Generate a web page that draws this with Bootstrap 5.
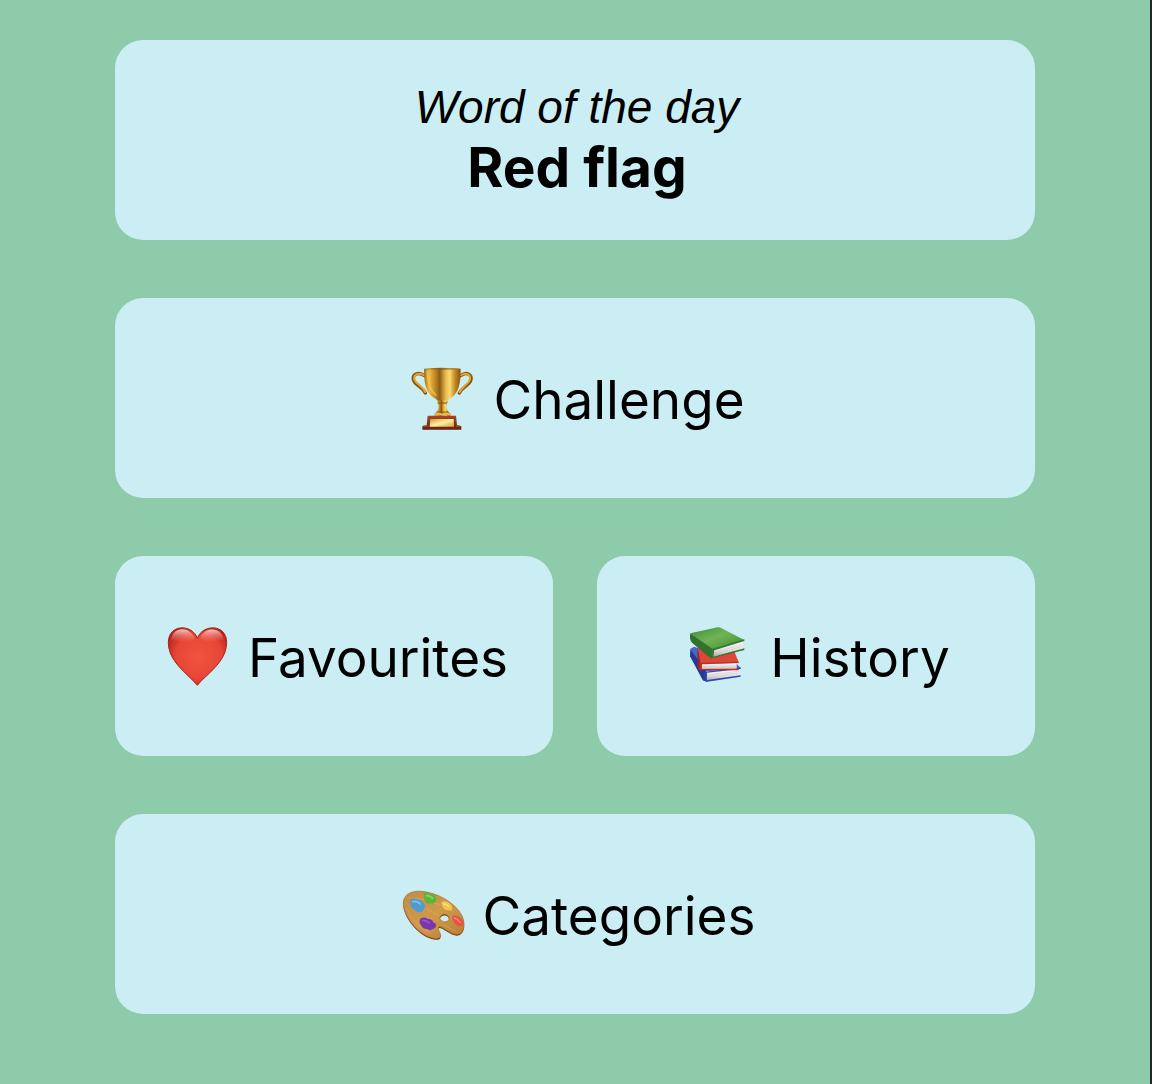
<!DOCTYPE html>
<html lang="en">
<head>
<meta charset="utf-8">
<meta name="viewport" content="width=device-width, initial-scale=1">
<title>Word of the day</title>
<link href="https://cdn.jsdelivr.net/npm/bootstrap@5.3.0/dist/css/bootstrap.min.css" rel="stylesheet">
<style>
body { background: #8ecbab; color: #000; font-family: Inter, "Liberation Sans", sans-serif; border-right: 2px solid #22272a; }
.home { width: 80%; padding: 40px 0; gap: 58px; }
.tile { min-height: 200px; border: 0; border-radius: 28px; background: #cbeef4; color: #000; font-size: 53px; line-height: 68px; padding: 4px 0 0 6px; gap: 16px; }
.tile:hover { background: #bde6ee; }
.tile svg { width: 66px; height: 68px; flex: none; }
.pair { gap: 44px; }
.eyebrow { font-family: "Liberation Sans", Arial, sans-serif; font-size: 46px; line-height: 60px; }
.phrase { font-size: 55px; line-height: 60px; }
.word-tile { gap: 0; padding: 0 0 6px 4px; }
</style>
<script src="https://cdn.jsdelivr.net/npm/bootstrap@5.3.0/dist/js/bootstrap.bundle.min.js" defer></script>
</head>
<body class="min-vh-100">
<main class="home d-flex flex-column mx-auto">
  <section class="tile word-tile d-flex flex-column align-items-center justify-content-center">
    <p class="eyebrow fst-italic mb-0">Word of the day</p>
    <h1 class="phrase fw-bold mb-0">Red flag</h1>
  </section>

  <button type="button" class="tile d-flex align-items-center justify-content-center">
    <svg viewBox="27 33 198 204" aria-hidden="true">
      <defs>
        <linearGradient id="cup"><stop offset="0" stop-color="#a56b12"/><stop offset=".14" stop-color="#edbd45"/><stop offset=".3" stop-color="#c28a25"/><stop offset=".43" stop-color="#8b5c16"/><stop offset=".58" stop-color="#e5b648"/><stop offset=".7" stop-color="#fbdc72"/><stop offset=".85" stop-color="#c28720"/><stop offset="1" stop-color="#87510c"/></linearGradient>
        <linearGradient id="plate" x2="1" y2="1"><stop stop-color="#d39a31"/><stop offset=".5" stop-color="#fff0a2"/><stop offset="1" stop-color="#d7a33c"/></linearGradient>
        <linearGradient id="wood" x2="0" y2="1"><stop stop-color="#a94628"/><stop offset="1" stop-color="#64210f"/></linearGradient>
      </defs>
      <g fill="none" stroke-linecap="round">
        <path d="M67 62C49 48 29 59 35 76C39 91 60 94 70 114M176 62C194 48 212 59 206 77C202 91 183 94 172 114" stroke="#8b540d" stroke-width="10"/>
        <path d="M66 61C48 50 32 61 38 75C42 87 62 92 70 111M177 61C195 50 208 61 203 76C197 88 182 93 173 111" stroke="#dfa638" stroke-width="6"/>
      </g>
      <path d="M66 41Q121 35 176 41C176 84 171 114 145 130Q134 136 130 144H112Q109 136 98 130C70 114 66 81 66 41Z" fill="url(#cup)"/>
      <path d="M67 42Q121 36 175 42Q121 46 67 42Z" fill="#8a5a18" opacity=".75"/>
      <path d="M76 49C77 83 83 107 103 122" fill="none" stroke="#f8ce62" stroke-width="5" opacity=".6"/>
      <path d="M105 139q16-6 33 0l-5 13q1 16 12 24v9H98v-9q12-9 12-24Z" fill="url(#cup)"/>
      <path d="M107 144h28M103 171h36" stroke="#84520f" stroke-width="3"/>
      <path d="M99 180q11-7 22 0q12-7 25 0" stroke="#e9b94d" stroke-width="6" fill="none"/>
      <path d="M77 182h85l3 28 13 4v10H61v-10l13-4Z" fill="url(#wood)"/>
      <path d="M85 192h70l1 23H83Z" fill="url(#plate)"/>
      <path d="M64 213h14M163 213h12" stroke="#c65f37" stroke-width="3"/>
    </svg>
    <span>Challenge</span>
  </button>

  <div class="pair d-flex">
    <button type="button" class="tile flex-fill w-50 d-flex align-items-center justify-content-center">
      <svg viewBox="21 27 198 204" aria-hidden="true">
        <defs>
          <radialGradient id="heart" cx=".52" cy=".5" r=".65"><stop stop-color="#f1543f"/><stop offset=".6" stop-color="#e74636"/><stop offset="1" stop-color="#a81a17"/></radialGradient>
          <linearGradient id="shine" x2="0" y2="1"><stop stop-color="#fff" stop-opacity=".75"/><stop offset="1" stop-color="#ff8572" stop-opacity="0"/></linearGradient>
        </defs>
        <path d="M115 70C101 27 28 25 28 83C28 127 62 158 93 188Q105 199 115 211Q126 197 140 185C172 155 203 124 203 83C203 25 130 27 115 70Z" fill="url(#heart)" stroke="#ae211f" stroke-width="3"/>
        <path d="M37 75C38 36 91 30 107 69Q101 85 72 80Q45 76 37 75ZM124 68C140 30 192 38 194 76Q175 76 155 82Q132 83 124 68Z" fill="url(#shine)"/>
      </svg>
      <span>Favourites</span>
    </button>
    <button type="button" class="tile flex-fill w-50 d-flex align-items-center justify-content-center">
      <svg viewBox="27 27 198 204" aria-hidden="true">
        <defs>
          <linearGradient id="green" x2="1" y2="1"><stop stop-color="#3e8837"/><stop offset=".45" stop-color="#70b454"/><stop offset="1" stop-color="#3e8735"/></linearGradient>
          <linearGradient id="pages" x2="0" y2="1"><stop stop-color="#faf9f6"/><stop offset=".6" stop-color="#e0dedf"/><stop offset="1" stop-color="#a5a1a7"/></linearGradient>
        </defs>
        <path d="M34 101l12-6 124 48 15 17-101 16Z" fill="#4865cf"/>
        <path d="M34 101l47 66-2 30q-4 3-8-2L33 124Z" fill="#263a91"/>
        <path d="M81 169l100-7v22l-98 14Z" fill="url(#pages)"/>
        <path d="M78 170l107-13v5L84 173v22l101-14v4L80 201q-6-12-2-31Z" fill="#3048ad"/>
        <path d="M56 94L165 107l14 34-115 6Z" fill="#df4636"/>
        <path d="M55 95l10 51-2 20q-6-2-7-8Z" fill="#942825"/>
        <path d="M66 146l107-2v19l-106 1Z" fill="url(#pages)"/>
        <path d="M63 143l116-3v4L69 148v14l110-1v5H64q-5-9-1-23Z" fill="#c22c2b"/>
        <path d="M34 55L116 37q5-1 9 1l71 37-94 30Z" fill="url(#green)"/>
        <path d="M34 55l67 47-2 28q-4 1-9-4L39 83Q30 73 34 55Z" fill="#32722f"/>
        <path d="M103 105l89-25-2 21-87 26Z" fill="url(#pages)"/>
        <path d="M100 101l96-28v5l-90 28-3 19 93-25v5l-95 25q-8-9-1-29Z" fill="#357a31"/>
        <path d="M105 113l83-24M104 119l84-24M69 154h102M84 181l96-13M83 187l96-13" stroke="#b8b6ba" stroke-width="1"/>
      </svg>
      <span>History</span>
    </button>
  </div>

  <button type="button" class="tile d-flex align-items-center justify-content-center">
    <svg viewBox="21 6 198 204" aria-hidden="true">
      <defs>
        <linearGradient id="board" x2="1" y2="1"><stop stop-color="#c18b46"/><stop offset=".5" stop-color="#d09a4b"/><stop offset="1" stop-color="#b77d34"/></linearGradient>
      </defs>
      <path transform="translate(0 4)" fill="#75451d" fill-rule="evenodd" d="M28 68C29 44 50 32 80 34C131 37 184 69 204 107C217 136 209 164 188 163C169 162 151 142 137 140C126 141 140 158 140 166C140 177 124 178 106 171C68 157 27 106 28 68ZM140 108C132 116 145 128 156 125C169 122 167 109 158 104Q147 99 140 108Z"/>
      <path fill="url(#board)" fill-rule="evenodd" stroke="#a76d30" stroke-width="2" d="M28 68C29 44 50 32 80 34C131 37 184 69 204 107C217 136 209 164 188 163C169 162 151 142 137 140C126 141 140 158 140 166C140 177 124 178 106 171C68 157 27 106 28 68ZM140 108C132 116 145 128 156 125C169 122 167 109 158 104Q147 99 140 108Z"/>
      <path d="M39 54Q95 49 178 94M38 85Q63 139 112 160M99 87l38 22M151 136q18 10 34 18" fill="none" stroke="#e1b46d" stroke-width="2" opacity=".7"/>
      <path d="M49 60q9-8 20-2q12 1 18 10q9 5 4 15q-2 13-14 13q-10 3-16-8q-15-5-12-28Z" fill="#4b9bd5"/>
      <path d="M56 65q12-4 23 7" fill="none" stroke="#83c3e9" stroke-width="5" stroke-linecap="round"/>
      <path d="M89 42q7-7 15-1q16-2 20 10q7 11-1 16q-8 5-16 3q-12 2-16-11Z" fill="#58b63b"/>
      <path d="M98 47q11 0 18 8" fill="none" stroke="#8ed45e" stroke-width="5" stroke-linecap="round"/>
      <path d="M142 68q7-7 18-2q12 5 15 18q-1 10-12 7q-16 0-21-23Z" fill="#f1c74b"/>
      <path d="M149 72q9-1 15 8" fill="none" stroke="#ffe07c" stroke-width="4" stroke-linecap="round"/>
      <path d="M174 110q5-8 13-2q17 5 21 18q3 13-7 13q-18-1-24-17Z" fill="#e95245"/>
      <path d="M181 114q11 3 17 13" fill="none" stroke="#fb8875" stroke-width="4" stroke-linecap="round"/>
      <path d="M80 115q11-6 21 1q14 0 17 11q12 5 7 15q-5 3-8 5q-9 7-17 0q-14 1-19-11q-8-10-1-21Z" fill="#7a36ae"/>
      <path d="M87 121q11 0 18 8" fill="none" stroke="#965bc4" stroke-width="5" stroke-linecap="round"/>
    </svg>
    <span>Categories</span>
  </button>
</main>
</body>
</html>
